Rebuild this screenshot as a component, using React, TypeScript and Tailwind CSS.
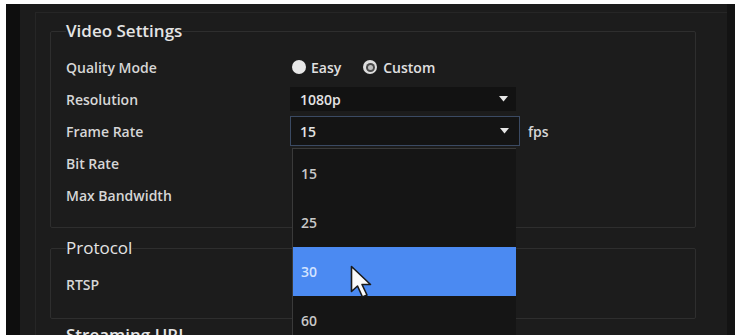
import type { ReactNode } from 'react'

function Caret() {
  return (
    <svg width="9" height="6" viewBox="0 0 9 6" className="shrink-0">
      <path d="M0 0h9L4.5 5.5z" fill="#e6e6e6" />
    </svg>
  )
}

function Cursor() {
  return (
    <svg width="24" height="34" viewBox="0 0 24 34" className="absolute left-[57px] top-[116px]">
      <path
        d="M1.5 1.5v25l6-5.5 5 11 4.5-2-5-10.5h8.5z"
        fill="#fafafa"
        stroke="#1a1a1a"
        strokeWidth={1.6}
        strokeLinejoin="round"
      />
    </svg>
  )
}

function Row({ label, children }: { label: string; children?: ReactNode }) {
  return (
    <div className="flex h-[32px] items-center">
      <div className="w-[224px] text-[14px] font-semibold text-[#d6d6d6]">{label}</div>
      {children}
    </div>
  )
}

const rates = ['15', '25', '30', '60']

export default function App() {
  return (
    <div
      className="flex h-[335px] w-[740px] overflow-hidden bg-white pl-[6px] pr-[5px] pt-[4px]"
      style={{ fontFamily: '"Open Sans", "Noto Sans", sans-serif' }}
    >
      <div className="w-[14px] bg-[#0e0e0e]" />
      <div className="flex-1 bg-[#1c1c1c]">
        <div className="ml-[15px] mt-[8px] h-full border-l border-t border-[#262626] pl-[14px] pt-[7px]">
          <fieldset className="w-[646px] rounded-[2px] border border-[#2e2e2e] px-[15px] pb-[16px] pt-[9px]">
            <legend className="text-[17px] font-semibold leading-[22px] text-[#e4e4e4]">Video Settings</legend>
            <Row label="Quality Mode">
              <div className="flex items-center text-[14px] font-semibold text-[#e0e0e0]">
                <span className="ml-[2px] h-[14px] w-[14px] rounded-full bg-[#e8e8e8]" />
                <span className="ml-[5px]">Easy</span>
                <span className="ml-[22px] flex h-[14px] w-[14px] items-center justify-center rounded-full bg-[#dedede]">
                  <span className="flex h-[9px] w-[9px] items-center justify-center rounded-full bg-[#4a4a4a]">
                    <span className="h-[5px] w-[5px] rounded-full bg-[#bdbdbd]" />
                  </span>
                </span>
                <span className="ml-[6px]">Custom</span>
              </div>
            </Row>
            <Row label="Resolution">
              <div className="flex h-[24px] w-[226px] items-center justify-between bg-[#121212] pl-[10px] pr-[8px] text-[14px] font-semibold text-[#e4e4e4]">
                1080p
                <Caret />
              </div>
            </Row>
            <Row label="Frame Rate">
              <div className="relative">
                <div className="flex h-[30px] w-[230px] items-center justify-between border border-[#3b4a63] bg-[#141414] pl-[9px] pr-[10px] text-[14px] font-semibold text-[#e4e4e4]">
                  15
                  <Caret />
                </div>
                <div className="absolute left-[2px] top-[32px] z-10 w-[224px] border-l border-t border-[#3a3a3a] bg-[#151515]">
                  {rates.map((r) => (
                    <div
                      key={r}
                      className={`flex h-[49px] items-center pl-[8px] text-[14px] font-semibold ${
                        r === '30' ? 'bg-[#4b8af2] text-[#d3e3ff]' : 'text-[#c8c8c8]'
                      }`}
                    >
                      {r}
                    </div>
                  ))}
                  <Cursor />
                </div>
              </div>
              <span className="ml-[8px] text-[14px] font-semibold text-[#d6d6d6]">fps</span>
            </Row>
            <Row label="Bit Rate" />
            <Row label="Max Bandwidth" />
          </fieldset>
          <fieldset className="mt-[9px] w-[646px] rounded-[2px] border border-[#2e2e2e] px-[15px] pb-[18px] pt-[9px]">
            <legend className="text-[17px] font-medium leading-[22px] text-[#e4e4e4]">Protocol</legend>
            <Row label="RTSP" />
          </fieldset>
          <fieldset className="mt-[5px] w-[646px] border border-[#2e2e2e] px-[15px]">
            <legend className="text-[17px] font-semibold leading-[22px] text-[#e4e4e4]">Streaming URL</legend>
          </fieldset>
        </div>
      </div>
      <div className="w-[8px] bg-[#131313]" />
    </div>
  )
}
